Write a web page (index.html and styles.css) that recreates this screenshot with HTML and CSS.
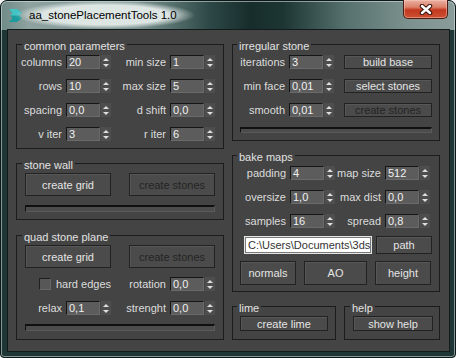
FILE: index.html
```html
<!DOCTYPE html>
<html lang="en">
<head>
    <meta charset="UTF-8">
    <title>aa_stonePlacementTools 1.0</title>
    <link rel="stylesheet" href="styles.css">
</head>
<body>

<div class="window">
    <!-- title bar -->
    <div class="titlebar">
        <svg class="app-icon" width="15" height="15" viewBox="0 0 15 15">
            <path d="M1 1 H9 L14 5 L11 7.5 L14 10 L9 14 H1 L4.5 10 L2.5 7.5 L4.5 5 Z" fill="#1c9c9f"/>
            <path d="M1 1 H9 L14 5 L11 7.5 H2.5 L4.5 5 Z" fill="#43c3c4"/>
        </svg>
        <span class="title">aa_stonePlacementTools 1.0</span>
        <button class="close">
            <svg width="14" height="11" viewBox="0 0 14 11">
                <path d="M3 2 L11 9 M11 2 L3 9" stroke="#3a1510" stroke-width="4.5" stroke-linecap="round"/>
                <path d="M3 2 L11 9 M11 2 L3 9" stroke="#fff" stroke-width="2.4" stroke-linecap="round"/>
            </svg>
        </button>
    </div>

    <div class="client">
        <!-- left column -->
        <div class="column">
            <div class="group common">
                <div class="group-title">common parameters</div>
                <div class="params four">
                    <span class="lbl">columns</span>
                    <div class="spinner"><span class="field">20</span><span class="arrows"></span></div>
                    <span class="lbl">min size</span>
                    <div class="spinner"><span class="field">1</span><span class="arrows"></span></div>

                    <span class="lbl">rows</span>
                    <div class="spinner"><span class="field">10</span><span class="arrows"></span></div>
                    <span class="lbl">max size</span>
                    <div class="spinner"><span class="field">5</span><span class="arrows"></span></div>

                    <span class="lbl">spacing</span>
                    <div class="spinner"><span class="field">0,0</span><span class="arrows"></span></div>
                    <span class="lbl">d shift</span>
                    <div class="spinner"><span class="field">0,0</span><span class="arrows"></span></div>

                    <span class="lbl">v iter</span>
                    <div class="spinner"><span class="field">3</span><span class="arrows"></span></div>
                    <span class="lbl">r iter</span>
                    <div class="spinner"><span class="field">6</span><span class="arrows"></span></div>
                </div>
            </div>

            <div class="group wall">
                <div class="group-title">stone wall</div>
                <div class="btn-pair">
                    <button class="btn big">create grid</button>
                    <button class="btn big off">create stones</button>
                </div>
                <div class="progress"></div>
            </div>

            <div class="group quad">
                <div class="group-title">quad stone plane</div>
                <div class="btn-pair">
                    <button class="btn big">create grid</button>
                    <button class="btn big off">create stones</button>
                </div>
                <div class="params four">
                    <label class="checkline"><span class="check"></span>hard edges</label>
                    <span class="lbl">rotation</span>
                    <div class="spinner"><span class="field">0,0</span><span class="arrows"></span></div>

                    <span class="lbl">relax</span>
                    <div class="spinner"><span class="field">0,1</span><span class="arrows"></span></div>
                    <span class="lbl">strenght</span>
                    <div class="spinner"><span class="field">0,0</span><span class="arrows"></span></div>
                </div>
                <div class="progress"></div>
            </div>
        </div>

        <!-- right column -->
        <div class="column">
            <div class="group irregular">
                <div class="group-title">irregular stone</div>
                <div class="params three">
                    <span class="lbl">iterations</span>
                    <div class="spinner"><span class="field">3</span><span class="arrows"></span></div>
                    <button class="btn">build base</button>

                    <span class="lbl">min face</span>
                    <div class="spinner"><span class="field">0,01</span><span class="arrows"></span></div>
                    <button class="btn">select stones</button>

                    <span class="lbl">smooth</span>
                    <div class="spinner"><span class="field">0,01</span><span class="arrows"></span></div>
                    <button class="btn off">create stones</button>
                </div>
                <div class="progress thin"></div>
            </div>

            <div class="group bake">
                <div class="group-title">bake maps</div>
                <div class="params bake-grid">
                    <span class="lbl">padding</span>
                    <div class="spinner"><span class="field">4</span><span class="arrows"></span></div>
                    <span class="lbl">map size</span>
                    <div class="spinner"><span class="field">512</span><span class="arrows"></span></div>

                    <span class="lbl">oversize</span>
                    <div class="spinner"><span class="field">1,0</span><span class="arrows"></span></div>
                    <span class="lbl">max dist</span>
                    <div class="spinner"><span class="field">0,0</span><span class="arrows"></span></div>

                    <span class="lbl">samples</span>
                    <div class="spinner"><span class="field">16</span><span class="arrows"></span></div>
                    <span class="lbl">spread</span>
                    <div class="spinner"><span class="field">0,8</span><span class="arrows"></span></div>
                </div>
                <div class="path-row">
                    <span class="path-field">C:\Users\Documents\3ds</span>
                    <button class="btn path-btn">path</button>
                </div>
                <div class="map-buttons">
                    <button class="btn map normals">normals</button>
                    <button class="btn map ao">AO</button>
                    <button class="btn map">height</button>
                </div>
            </div>

            <div class="small-groups">
                <div class="group lime">
                    <div class="group-title">lime</div>
                    <button class="btn">create lime</button>
                </div>
                <div class="group help">
                    <div class="group-title">help</div>
                    <button class="btn">show help</button>
                </div>
            </div>
        </div>
    </div>
</div>

</body>
</html>
```

FILE: styles.css
```css
/* General */
body {
    margin: 0;
    background-color: #f2f4f4;
    font-family: 'Liberation Sans', Arial, sans-serif;
    font-size: 11px;
}

/* Window frame */
.window {
    box-sizing: border-box;
    width: 456px;
    height: 358px;
    padding: 0 5px 4px 6px;
    border: 1px solid #0c1818;
    border-radius: 7px 7px 4px 4px;
    background:
        linear-gradient(to right, #6f8a87 0%, #8ea29f 6%, #7d9592 30%, #2c4846 46%, #172d2c 55%, #1c3533 62%, #56716e 76%, #7d928f 90%, #8a9c99 100%) top left / 100% 29px no-repeat,
        #1e3635;
    box-shadow: inset 0 0 0 1px rgba(220, 232, 230, 0.55);
}

.titlebar {
    display: flex;
    align-items: flex-start;
    height: 28px;
}

.app-icon {
    margin: 7px 0 0 1px;
}

/* Aero style glow behind the caption */
.title {
    margin: 0 0 0 -8px;
    padding: 6px 18px 6px 14px;
    font-size: 11.5px;
    line-height: 16px;
    color: #000;
    background: radial-gradient(closest-side, rgba(222, 230, 228, 1) 70%, rgba(222, 230, 228, 0) 100%);
}

.close {
    display: flex;
    align-items: center;
    justify-content: center;
    margin: -1px 2px 0 auto;
    width: 45px;
    height: 19px;
    padding: 0;
    border: 1px solid #4a1c13;
    border-top: none;
    border-radius: 0 0 5px 5px;
    background: linear-gradient(#eab1a3 0%, #dc8069 40%, #c3381e 55%, #cd5032 100%);
    box-shadow: inset 0 0 0 1px rgba(255, 210, 200, 0.45);
}

/* Client area */
.client {
    display: flex;
    gap: 8px;
    height: 323px;
    box-sizing: border-box;
    padding: 14px 9px 0 8px;
    border: 1px solid #121a1a;
    background-color: #444;
    color: #dcdcdc;
}

.column {
    display: flex;
    flex-direction: column;
    gap: 14px;
    width: 208px;
}

/* Group boxes */
.group {
    box-sizing: border-box;
    border: 1px solid #1c1c1c;
    padding: 0 8px 7px 8px;
}

.group-title {
    display: table;
    margin: -5px 0 0 -3px;
    padding: 0 2px;
    line-height: 12px;
    background-color: #444;
    color: #e2e2e2;
}

.column:last-child .group {
    padding: 0 7px 7px 7px;
}

.quad {
    margin-top: 1px;
    padding-bottom: 8px;
}

/* Parameter grids */
.params {
    display: grid;
    grid-auto-rows: 14px;
    column-gap: 4px;
    row-gap: 10px;
    align-items: center;
    margin-top: 3px;
}

.params.four {
    grid-template-columns: 37px 45px 1fr 45px;
}

.params.three {
    grid-template-columns: 45px 45px 1fr;
}

.params.bake-grid {
    grid-template-columns: 46px 45px 42px 45px;
}

.quad .params {
    margin-top: 9px;
}

.lbl {
    justify-self: end;
    white-space: nowrap;
    line-height: 14px;
}

/* Spinner */
.spinner {
    display: flex;
    height: 14px;
}

.field {
    box-sizing: border-box;
    width: 34px;
    height: 14px;
    padding-left: 2px;
    border: 1px solid;
    border-color: #161616 #6a6a6a #6a6a6a #161616;
    background-color: #5c5c5c;
    color: #f0f0f0;
    line-height: 12px;
}

.arrows {
    display: flex;
    flex-direction: column;
    align-items: center;
    justify-content: center;
    gap: 3px;
    width: 10px;
    margin-left: 1px;
    background-color: #4e4e4e;
}

.arrows::before,
.arrows::after {
    content: "";
    border-left: 3px solid transparent;
    border-right: 3px solid transparent;
}

.arrows::before {
    border-bottom: 3px solid #dedede;
}

.arrows::after {
    border-top: 3px solid #dedede;
}

/* Buttons */
.btn {
    box-sizing: border-box;
    height: 14px;
    padding: 0;
    border: 1px solid #222;
    background-color: #4b4b4b;
    box-shadow: inset 1px 1px 0 #575757;
    font-family: inherit;
    font-size: 11px;
    line-height: 12px;
    color: #e4e4e4;
}

/* greyed out until the previous step has run */
.btn.off {
    color: #242424;
}

.params.three .btn {
    justify-self: end;
    width: 88px;
}

.btn-pair {
    display: flex;
    justify-content: space-between;
    margin-top: 2px;
}

.btn.big {
    width: 86px;
    height: 23px;
}

/* Progress bars */
.progress {
    box-sizing: border-box;
    height: 7px;
    margin-top: 9px;
    border: 1px solid;
    border-color: #101010 #5a5a5a #5a5a5a #101010;
    border-top-width: 2px;
    background-color: #4c4c4c;
}

.progress.thin {
    height: 6px;
    margin-top: 10px;
}

/* Checkbox */
.checkline {
    grid-column: 1 / 3;
    justify-self: end;
    display: flex;
    align-items: center;
    gap: 5px;
    white-space: nowrap;
}

.check {
    box-sizing: border-box;
    width: 12px;
    height: 12px;
    border: 1px solid;
    border-color: #1e1e1e #666 #666 #1e1e1e;
    background-color: #575757;
}

/* Bake maps */
.path-row {
    display: flex;
    justify-content: space-between;
    margin-top: 8px;
}

.path-field {
    box-sizing: border-box;
    width: 128px;
    height: 18px;
    margin-left: 4px;
    padding: 0 3px;
    overflow: hidden;
    white-space: nowrap;
    border: 1px solid #e6e6e6;
    box-shadow: inset 0 0 0 1px #7a7a7a;
    background-color: #fff;
    color: #333;
    line-height: 16px;
}

.path-btn {
    width: 56px;
    height: 18px;
}

.map-buttons {
    display: flex;
    gap: 8px;
    margin-top: 7px;
}

.btn.map {
    width: 56px;
    height: 24px;
}

.btn.map.ao {
    width: 63px;
}

.bake {
    padding-bottom: 6px !important;
}

/* lime / help */
.small-groups {
    display: flex;
    gap: 8px;
}

.lime {
    width: 104px;
    padding-bottom: 8px !important;
}

.help {
    width: 96px;
    padding: 0 6px 8px 8px !important;
}

.lime .btn,
.help .btn {
    display: block;
    width: 100%;
    height: 15px;
    margin-top: 2px;
}
```
